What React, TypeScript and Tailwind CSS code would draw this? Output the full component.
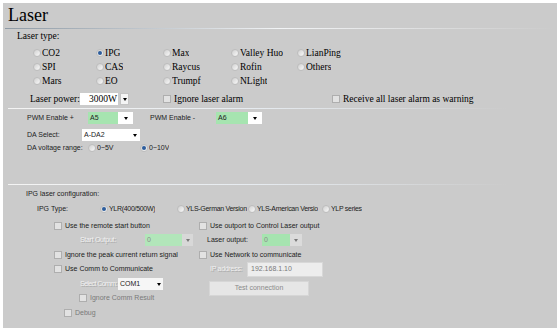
import React from "react";

const serif = "[font-family:Liberation_Serif,serif] text-[9.5px] text-black";
const sans = "[font-family:Liberation_Sans,Arial,sans-serif] text-[7px] text-[#222]";
const disabled = "text-[#f2f2f2] [text-shadow:1px_1px_0_#a9a9a9]";

function Radio({ checked, label, className = "" }: { checked?: boolean; label: string; className?: string }) {
  return (
    <span className={`flex items-center shrink-0 whitespace-nowrap ${className}`}>
      <span className="w-[8px] h-[8px] mr-[1px] rounded-full border border-[#bdbdbd] bg-gradient-to-br from-[#d0d0d0] to-[#fafafa] flex items-center justify-center shrink-0">
        {checked && <span className="w-[4px] h-[4px] rounded-full bg-[#2c5d9c]" />}
      </span>
      <span className="overflow-hidden">{label}</span>
    </span>
  );
}

function Check({ label, className = "", labelClass = "" }: { label: string; className?: string; labelClass?: string }) {
  return (
    <span className={`flex items-center shrink-0 whitespace-nowrap ${className}`}>
      <span className="w-[8px] h-[8px] mr-[3px] border border-[#aeaeae] bg-[#e2e2e2] shrink-0" />
      <span className={labelClass}>{label}</span>
    </span>
  );
}

function Arrow() {
  return <span className="w-0 h-0 border-l-[2.5px] border-r-[2.5px] border-t-[3px] border-l-transparent border-r-transparent border-t-black" />;
}

function Combo({
  value,
  w,
  aw,
  bg = "bg-white",
  arrowBg = "bg-white",
  muted,
}: {
  value: string;
  w: number;
  aw: number;
  bg?: string;
  arrowBg?: string;
  muted?: boolean;
}) {
  return (
    <span className="flex h-[12px] shrink-0">
      <span className={`${bg} flex items-center px-[2px] ${muted ? "text-[#8a8a8a]" : ""}`} style={{ width: w }}>
        {value}
      </span>
      <span className={`${arrowBg} flex items-center justify-center ${muted ? "opacity-40" : ""}`} style={{ width: aw }}>
        <Arrow />
      </span>
    </span>
  );
}

function Divider() {
  return <div className="h-px ml-[5px] w-[500px] bg-gradient-to-r from-[#f4f4f4] via-[#e6ebf0] to-transparent" />;
}

export default function App() {
  return (
    <div className="w-[560px] h-[331px] bg-white pt-[3px] pl-[3px] overflow-hidden">
      <div className="w-[554px] h-[325px] bg-[#cbcbcb]">
        {/* header */}
        <div className="h-[25px] pl-[5px] flex items-center [font-family:Liberation_Serif,serif] text-[18px] text-black">
          Laser
        </div>
        <div className="h-px ml-[2px] w-[550px] bg-gradient-to-r from-[#8e9aa5] via-[#f2f4f6] to-transparent" />

        <div className={serif}>
          <div className="mt-[1px] h-[12px] pl-[14px] flex items-center">Laser type:</div>

          <div className="mt-[4px] pl-[30px]">
            <div className="h-[14px] flex items-center">
              <Radio label="CO2" className="w-[63px]" />
              <Radio label="IPG" checked className="w-[67px]" />
              <Radio label="Max" className="w-[68px]" />
              <Radio label="Valley Huo" className="w-[66px]" />
              <Radio label="LianPing" />
            </div>
            <div className="h-[14px] flex items-center">
              <Radio label="SPI" className="w-[63px]" />
              <Radio label="CAS" className="w-[67px]" />
              <Radio label="Raycus" className="w-[68px]" />
              <Radio label="Rofin" className="w-[66px]" />
              <Radio label="Others" />
            </div>
            <div className="h-[14px] flex items-center">
              <Radio label="Mars" className="w-[63px]" />
              <Radio label="EO" className="w-[67px]" />
              <Radio label="Trumpf" className="w-[68px]" />
              <Radio label="NLight" />
            </div>
          </div>

          <div className="mt-[4px] h-[14px] pl-[27px] flex items-center">
            <span className="w-[50px] shrink-0">Laser power:</span>
            <span className="flex h-[12px] shrink-0">
              <span className="w-[38px] bg-white flex items-center justify-end pr-[1px]">3000W</span>
              <span className="w-[9px] ml-[2px] bg-[#f4f4f4] border border-[#c4c4c4] flex items-center justify-center">
                <Arrow />
              </span>
            </span>
            <Check label="Ignore laser alarm" className="ml-[34px] w-[169px]" />
            <Check label="Receive all laser alarm as warning" />
          </div>
        </div>

        <div className="mt-[2px]">
          <Divider />
        </div>

        <div className={sans}>
          <div className="mt-[3px] h-[12px] pl-[24px] flex items-center">
            <span className="w-[61px] shrink-0">PWM Enable +</span>
            <Combo value="A5" w={30} aw={15} bg="bg-[#a6e4b0]" />
            <span className="w-[66px] ml-[17px] shrink-0">PWM Enable -</span>
            <Combo value="A6" w={32} aw={14} bg="bg-[#a6e4b0]" />
          </div>
          <div className="mt-[5px] h-[12px] pl-[24px] flex items-center">
            <span className="w-[55px] shrink-0">DA Select:</span>
            <Combo value="A-DA2" w={48} aw={10} />
          </div>
          <div className="mt-[1px] h-[12px] pl-[24px] flex items-center">
            <span className="w-[61px] shrink-0">DA voltage range:</span>
            <Radio label="0~5V" className="w-[52px]" />
            <Radio label="0~10V" checked />
          </div>

          <div className="mt-[30px]">
            <Divider />
          </div>

          <div className="mt-[3px] h-[12px] pl-[23px] flex items-center">IPG laser configuration:</div>
          <div className="mt-[3px] h-[12px] pl-[34px] flex items-center tracking-[-0.3px]">
            <span className="w-[63px] shrink-0 tracking-normal">IPG Type:</span>
            <Radio label="YLR(400/500W)" checked className="w-[77px]" />
            <Radio label="YLS-German Version" className="w-[71px]" />
            <Radio label="YLS-American Versio" className="w-[74px]" />
            <Radio label="YLP series" />
          </div>

          <div className="pl-[51px]">
            <div className="mt-[5px] h-[12px] flex items-center">
              <Check label="Use the remote start button" className="w-[145px]" />
              <Check label="Use outport to Control Laser output" />
            </div>
            <div className="mt-[2px] h-[12px] flex items-center">
              <span className="w-[145px] shrink-0 flex items-center">
                <span className={`w-[91px] pl-[26px] shrink-0 whitespace-nowrap tracking-[-0.3px] ${disabled}`}>Start Output:</span>
                <Combo value="0" w={37} aw={11} bg="bg-[#b2e6ba]" arrowBg="bg-[#ececec]" muted />
              </span>
              <span className="w-[63px] pl-[8px] shrink-0">Laser output:</span>
              <Combo value="0" w={28} aw={12} bg="bg-[#a6e4b0]" arrowBg="bg-[#f4f4f4]" muted />
            </div>
            <div className="mt-[3px] h-[12px] flex items-center">
              <Check label="Ignore the peak current return signal" className="w-[145px]" />
              <Check label="Use Network to communicate" />
            </div>
            <div className="mt-[2px] h-[12px] flex items-center">
              <Check label="Use Comm to Communicate" className="w-[145px]" />
              <span className={`w-[48px] pl-[11px] shrink-0 whitespace-nowrap tracking-[-0.3px] ${disabled}`}>IP address:</span>
              <span className="w-[76px] h-[15px] bg-[#ededed] border border-[#d8d8d8] flex items-center px-[3px] text-[#7a7a7a]">
                192.168.1.10
              </span>
            </div>

            <div className="flex">
              <div className="w-[145px] shrink-0">
                <div className="mt-[3px] h-[12px] flex items-center">
                  <span className={`w-[64px] pl-[26px] shrink-0 whitespace-nowrap tracking-[-0.6px] ${disabled}`}>Select Comm:</span>
                  <Combo value="COM1" w={36} aw={9} bg="bg-[#f6f6f6]" arrowBg="bg-[#f6f6f6]" />
                </div>
                <div className="mt-[2px] h-[12px] pl-[25px] flex items-center">
                  <Check label="Ignore Comm Result" labelClass="text-[#7a7a7a]" />
                </div>
                <div className="mt-[3px] h-[12px] pl-[10px] flex items-center">
                  <Check label="Debug" labelClass="text-[#7a7a7a]" />
                </div>
              </div>
              <div className="pl-[10px] pt-[6px]">
                <button className="w-[100px] h-[15px] bg-[#e6e6e6] border border-[#d6d6d6] text-[#8a8a8a] flex items-center justify-center">
                  Test connection
                </button>
              </div>
            </div>
          </div>
        </div>
      </div>
    </div>
  );
}
